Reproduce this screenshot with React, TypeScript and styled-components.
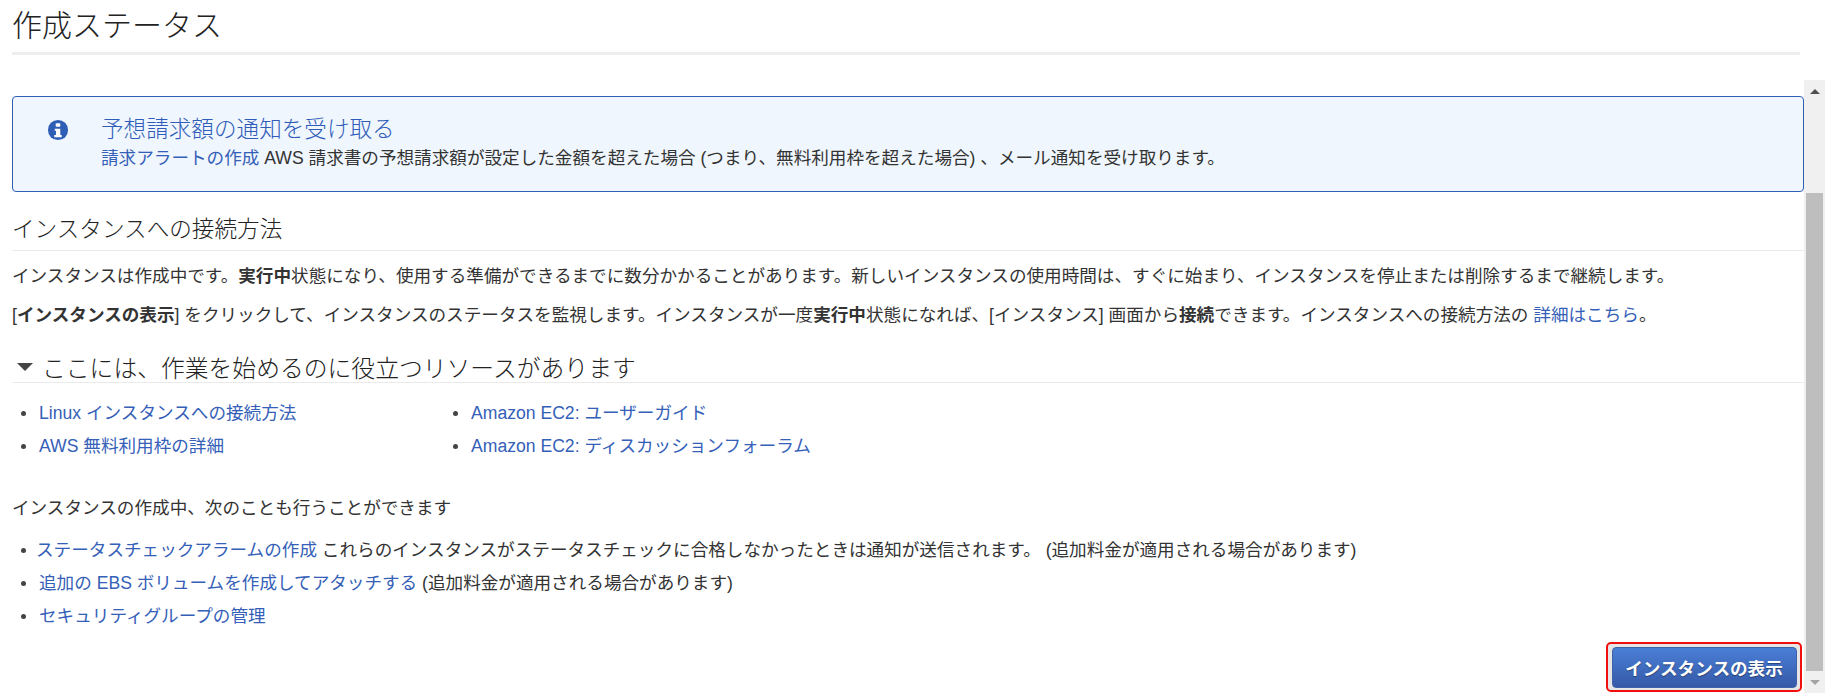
import React from "react";
import styled, { createGlobalStyle } from "styled-components";

const Global = createGlobalStyle`
  html, body { margin: 0; padding: 0; background: #fff; overflow: hidden; }
  body { font-family: "Liberation Sans", "Noto Sans CJK JP", sans-serif; color: #333; }
`;
const Page = styled.div`
  width: 1834px; height: 698px; overflow: hidden; display: flex; flex-direction: column; padding-left: 12px; box-sizing: border-box;
`;
const Title = styled.h1`
  margin: 0; width: 1788px; box-sizing: border-box; font-size: 30px; line-height: 52px; font-weight: 300;
  color: #222; border-bottom: 3px solid #eee; height: 55px;
`;
const Body = styled.div`
  display: flex; margin-top: 25px; height: 613px; align-items: stretch;
`;
const Content = styled.main`
  width: 1792px; display: flex; flex-direction: column; padding-top: 16px; box-sizing: border-box; position: relative;
`;
const Banner = styled.section`
  height: 96px; box-sizing: border-box; border: 1px solid #2f5fb5; border-radius: 4px; background: #eff6fd;
  display: flex; padding: 19px 0 0 34px; flex-shrink: 0;
`;
const InfoIcon = styled.svg`
  width: 22px; height: 22px; margin-top: 3px; margin-right: 32px; flex-shrink: 0;
`;
const BannerText = styled.div`display: flex; flex-direction: column;`;
const BannerTitle = styled.div`font-size: 22.6px; line-height: 28px; color: #2f5cb8; font-weight: 300;`;
const Text = styled.div`font-size: 17.6px; line-height: 28px; color: #333;`;
const Link = styled.a`color: #3560b8; text-decoration: none;`;
const Section = styled.h2<{ $top: number; $height: number; $size: number; $lift: number }>`
  margin: ${(p) => p.$top}px 0 0; font-size: ${(p) => p.$size}px; height: ${(p) => p.$height}px; font-weight: 300; color: #222;
  box-sizing: border-box; padding-bottom: ${(p) => p.$lift}px;
  display: flex; align-items: center; border-bottom: 1px solid #eaeaea; flex-shrink: 0;
`;
const Caret = styled.span`
  width: 0; height: 0; border-left: 8px solid transparent; border-right: 8px solid transparent; border-top: 8px solid #444;
  margin: 2px 9px 0 5px;
`;
const Para = styled.p<{ $top: number }>`
  margin: ${(p) => p.$top}px 0 0; font-size: 17.6px; line-height: 24px; color: #333;
`;
const Columns = styled.div<{ $top: number }>`display: flex; margin-top: ${(p) => p.$top}px;`;
const Bullets = styled.ul<{ $width?: number }>`
  margin: 0; padding: 0; list-style: none; width: ${(p) => (p.$width ? `${p.$width}px` : "auto")};
  display: flex; flex-direction: column; gap: 9px;
`;
const Item = styled.li<{ $gap: number }>`
  font-size: 17.6px; line-height: 24px; color: #333; display: flex; align-items: center; white-space: pre;
  padding-left: 9px;
  &::before { content: ""; width: 5px; height: 5px; border-radius: 50%; background: #444; margin-right: ${(p) => p.$gap}px; }
`;
const ButtonFrame = styled.div`
  position: absolute; right: 2px; bottom: 1px; width: 196px; height: 50px; box-sizing: border-box; border: 2px solid #f00f0f;
  border-radius: 5px; background: #e6e6e6; display: flex; align-items: center; justify-content: center;
`;
const Button = styled.button`
  width: 185px; height: 41px; border: 1px solid #3d62a8; border-radius: 4px; background: linear-gradient(#4a7fd6, #3559a8);
  color: #fff; font: bold 17.6px "Liberation Sans", "Noto Sans CJK JP", sans-serif; padding: 0;
  text-shadow: 0 1px 1px rgba(0,0,0,.4);
`;
const Scrollbar = styled.div`
  width: 21px; background: #f0f0f0; display: flex; flex-direction: column; align-items: center; height: 613px;
`;
const ArrowBox = styled.div`height: 22px; flex-shrink: 0; display: flex; align-items: center; justify-content: center; width: 100%;`;
const ArrowUp = styled.span`
  width: 0; height: 0; border-left: 5px solid transparent; border-right: 5px solid transparent; border-bottom: 5px solid #505050;
`;
const ArrowDown = styled.span`
  width: 0; height: 0; border-left: 5px solid transparent; border-right: 5px solid transparent; border-top: 5px solid #a3a3a3;
`;
const Track = styled.div`flex: 1; width: 100%; padding-top: 91px; box-sizing: border-box; display: flex; justify-content: center;`;
const Thumb = styled.div`width: 17px; height: 100%; background: #bebebe;`;

export default function App() {
  return (
    <Page>
      <Global />
      <Title>作成ステータス</Title>
      <Body>
        <Content>
          <Banner>
            <InfoIcon viewBox="0 0 24 24">
              <circle cx="12" cy="12" r="11" fill="#2f5fb5" />
              <rect x="9.5" y="4.5" width="5" height="4" rx="0.8" fill="#fff" />
              <path d="M8.5 10.5h6v7h1.5v2.5H8v-2.5h1.8v-4.8H8.5z" fill="#fff" />
            </InfoIcon>
            <BannerText>
              <BannerTitle>予想請求額の通知を受け取る</BannerTitle>
              <Text>
                <Link>請求アラートの作成</Link> AWS 請求書の予想請求額が設定した金額を超えた場合 (つまり、無料利用枠を超えた場合) 、メール通知を受け取ります。
              </Text>
            </BannerText>
          </Banner>
          <Section $top={16} $height={43} $size={22.6} $lift={4}>インスタンスへの接続方法</Section>
          <Para $top={13}>
            インスタンスは作成中です。<b>実行中</b>状態になり、使用する準備ができるまでに数分かかることがあります。新しいインスタンスの使用時間は、すぐに始まり、インスタンスを停止または削除するまで継続します。
          </Para>
          <Para $top={15}>
            [<b>インスタンスの表示</b>] をクリックして、インスタンスのステータスを監視します。インスタンスが一度<b>実行中</b>状態になれば、[インスタンス] 画面から<b>接続</b>できます。インスタンスへの接続方法の <Link>詳細はこちら</Link>。
          </Para>
          <Section $top={29} $height={27} $size={23.8} $lift={6}>
            <Caret />
            ここには、作業を始めるのに役立つリソースがあります
          </Section>
          <Columns $top={18}>
            <Bullets $width={432}>
              <Item $gap={13}><Link>Linux インスタンスへの接続方法</Link></Item>
              <Item $gap={13}><Link>AWS 無料利用枠の詳細</Link></Item>
            </Bullets>
            <Bullets>
              <Item $gap={13}><Link>Amazon EC2: ユーザーガイド</Link></Item>
              <Item $gap={13}><Link>Amazon EC2: ディスカッションフォーラム</Link></Item>
            </Bullets>
          </Columns>
          <Para $top={38}>インスタンスの作成中、次のことも行うことができます</Para>
          <Columns $top={18}>
            <Bullets>
              <Item $gap={10}><Link>ステータスチェックアラームの作成</Link> これらのインスタンスがステータスチェックに合格しなかったときは通知が送信されます。 (追加料金が適用される場合があります)</Item>
              <Item $gap={13}><Link>追加の EBS ボリュームを作成してアタッチする</Link> (追加料金が適用される場合があります)</Item>
              <Item $gap={13}><Link>セキュリティグループの管理</Link></Item>
            </Bullets>
          </Columns>
          <ButtonFrame><Button>インスタンスの表示</Button></ButtonFrame>
        </Content>
        <Scrollbar>
          <ArrowBox><ArrowUp /></ArrowBox>
          <Track><Thumb /></Track>
          <ArrowBox><ArrowDown /></ArrowBox>
        </Scrollbar>
      </Body>
    </Page>
  );
}
